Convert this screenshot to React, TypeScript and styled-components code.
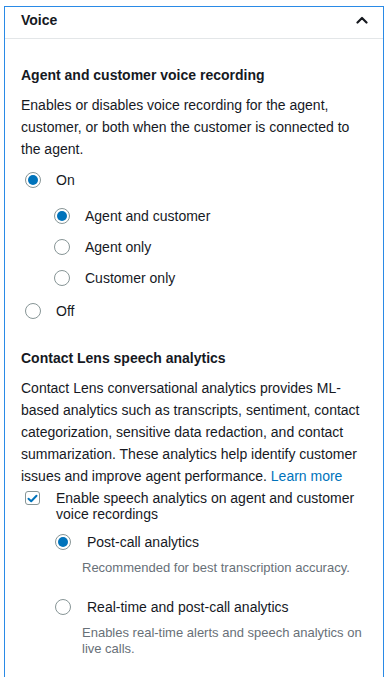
import React from "react";
import styled, { createGlobalStyle } from "styled-components";

const Global = createGlobalStyle`
  html, body { margin: 0; padding: 0; background: #ffffff; }
  body { font-family: "Liberation Sans", Arial, Helvetica, sans-serif; color: #16191f; }
  * { box-sizing: border-box; }
`;

const Page = styled.div`
  padding: 6px 5px 0 4px;
`;

const Card = styled.section`
  border: 1px solid #2a8ae6;
  border-bottom: none;
  background: #fff;
  height: 700px;
`;

const Header = styled.div`
  display: flex;
  align-items: center;
  justify-content: space-between;
  height: 32px;
  padding: 0 15px 6px 16px;
  border-bottom: 1px solid #e3e6e8;
`;

const HeaderTitle = styled.h2`
  margin: 0;
  font-size: 14px;
  font-weight: 700;
  color: #16191f;
`;

const Body = styled.div`
  padding: 26px 16px 0 16px;
`;

const SectionTitle = styled.h3<{ $top?: number }>`
  margin: ${(p) => p.$top ?? 0}px 0 0 0;
  font-size: 14px;
  line-height: 20px;
  font-weight: 700;
  color: #16191f;
`;

const Paragraph = styled.p`
  margin: 9px 0 0 0;
  font-size: 14px;
  line-height: 22px;
  color: #16191f;
`;

const Link = styled.a`
  color: #0073bb;
  text-decoration: none;
`;

const OptionList = styled.div<{ $indent?: number; $top?: number }>`
  display: flex;
  flex-direction: column;
  margin: ${(p) => p.$top ?? 0}px 0 0 ${(p) => p.$indent ?? 0}px;
`;

const OptionRow = styled.label<{ $h?: number }>`
  display: flex;
  align-items: center;
  height: ${(p) => p.$h ?? 31}px;
  font-size: 14px;
  color: #16191f;
`;

const RadioCircle = styled.span<{ $checked?: boolean }>`
  flex: none;
  width: 16px;
  height: 16px;
  border-radius: 50%;
  border: 1.5px solid #879596;
  display: flex;
  align-items: center;
  justify-content: center;
  margin-right: 15px;
  &::after {
    content: "";
    width: 10px;
    height: 10px;
    border-radius: 50%;
    background: ${(p) => (p.$checked ? "#0073bb" : "transparent")};
  }
`;

const Radio = ({ checked, label, h }: { checked?: boolean; label: string; h?: number }) => (
  <OptionRow $h={h}>
    <RadioCircle $checked={checked} />
    {label}
  </OptionRow>
);

const CheckRow = styled.label`
  display: flex;
  align-items: flex-start;
  margin: 3px 0 0 4px;
  font-size: 14px;
  line-height: 16px;
  color: #16191f;
`;

const CheckBox = styled.span`
  flex: none;
  width: 15px;
  height: 14px;
  border: 1.5px solid #879596;
  border-radius: 3px;
  margin: 1px 16px 0 0;
  display: flex;
  align-items: center;
  justify-content: center;
`;

const SubOption = styled.div<{ $top?: number }>`
  display: flex;
  flex-direction: column;
  margin: ${(p) => p.$top ?? 0}px 0 0 34px;
`;

const SubLabel = styled.div`
  display: flex;
  align-items: center;
  height: 20px;
  font-size: 14px;
  color: #16191f;
`;

const SubRadio = styled(RadioCircle)`
  margin-right: 16px;
`;

const Description = styled.div`
  margin: 8px 0 0 27px;
  font-size: 13px;
  line-height: 16px;
  color: #687078;
`;

export default function App() {
  return (
    <>
      <Global />
      <Page>
        <Card>
          <Header>
            <HeaderTitle>Voice</HeaderTitle>
            <svg width="12" height="8" viewBox="0 0 12 8">
              <path d="M1.5 6.5 L6 2 L10.5 6.5" fill="none" stroke="#16191f" strokeWidth="2.2" strokeLinecap="round" strokeLinejoin="round" />
            </svg>
          </Header>
          <Body>
            <SectionTitle>Agent and customer voice recording</SectionTitle>
            <Paragraph>
              Enables or disables voice recording for the agent, customer, or both when the customer is connected to the agent.
            </Paragraph>
            <OptionList $indent={4} $top={3}>
              <Radio checked label="On" h={34} />
              <OptionList $indent={29} $top={3}>
                <Radio checked label="Agent and customer" />
                <Radio label="Agent only" />
                <Radio label="Customer only" />
              </OptionList>
              <Radio label="Off" h={36} />
            </OptionList>
            <SectionTitle $top={19}>Contact Lens speech analytics</SectionTitle>
            <Paragraph>
              Contact Lens conversational analytics provides ML-based analytics such as transcripts, sentiment, contact categorization, sensitive data redaction, and contact summarization. These analytics help identify customer issues and improve agent performance. <Link href="#">Learn more</Link>
            </Paragraph>
            <CheckRow>
              <CheckBox>
                <svg width="11" height="9" viewBox="0 0 11 9">
                  <path d="M1.5 4.8 L4.2 7.3 L9.5 1.8" fill="none" stroke="#0073bb" strokeWidth="2" strokeLinecap="round" strokeLinejoin="round" />
                </svg>
              </CheckBox>
              <span>Enable speech analytics on agent and customer voice recordings</span>
            </CheckRow>
            <SubOption $top={10}>
              <SubLabel>
                <SubRadio $checked />
                Post-call analytics
              </SubLabel>
              <Description>Recommended for best transcription accuracy.</Description>
            </SubOption>
            <SubOption $top={21}>
              <SubLabel>
                <SubRadio />
                Real-time and post-call analytics
              </SubLabel>
              <Description>Enables real-time alerts and speech analytics on live calls.</Description>
            </SubOption>
          </Body>
        </Card>
      </Page>
    </>
  );
}
